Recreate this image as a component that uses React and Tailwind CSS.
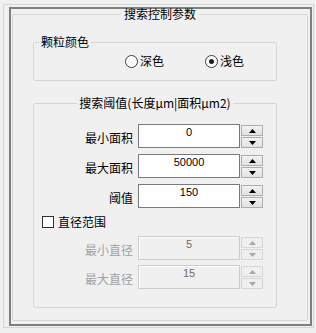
const cjk = { fontFamily: '"Noto Sans CJK SC", "Noto Sans", sans-serif' };
const num = { fontFamily: '"Liberation Sans", Arial, sans-serif' };

const Arrow = ({ up, disabled }) => (
    <svg width="7" height="4" viewBox="0 0 7 4">
        <polygon
            points={up ? '3.5,0 7,4 0,4' : '0,0 7,0 3.5,4'}
            fill={disabled ? '#a8a8a8' : '#000'}
        />
    </svg>
);

const Spinner = ({ disabled }) => {
    const btn = disabled
        ? 'h-[11px] w-[22px] flex items-center justify-center border border-[#d6d6d6] bg-[#efefef]'
        : 'h-[11px] w-[22px] flex items-center justify-center border border-[#adadad] bg-gradient-to-b from-[#f2f2f2] to-[#e2e2e2]';
    return (
        <div className="ml-[1px] pt-[1px] flex flex-col gap-[1px]">
            <div className={btn}><Arrow up disabled={disabled} /></div>
            <div className={btn}><Arrow disabled={disabled} /></div>
        </div>
    );
};

const NumRow = ({ label, value, disabled }) => (
    <div className="flex h-[24px] items-start">
        <div
            className={`w-[99px] pt-[7px] text-right text-[12px] leading-[13px] ${disabled ? 'text-[#a0a0a0]' : 'text-black'}`}
            style={cjk}
        >
            {label}
        </div>
        <div
            className={`ml-[5px] h-[24px] w-[102px] border text-center text-[11px] leading-[14px] ${disabled
                ? 'border-[#cccccc] bg-[#f0f0f0] text-[#6d6d6d] shadow-[inset_1px_1px_0_#ffffff]'
                : 'border-[#7a7a7a] bg-white text-black'
                }`}
            style={num}
        >
            {value}
        </div>
        <Spinner disabled={disabled} />
    </div>
);

const Radio = ({ label, checked }) => (
    <div className="flex items-center gap-[2px]">
        <div className="w-[13px] h-[13px] rounded-full border border-[#3c3c3c] bg-white flex items-center justify-center">
            {checked && <div className="w-[5px] h-[5px] rounded-full bg-[#1e1e1e]" />}
        </div>
        <span className="text-[12px] leading-[14px] text-black" style={cjk}>{label}</span>
    </div>
);

export default function App() {
    return (
        <div className="w-[316px] h-[333px] bg-[#f0f0f0] pl-[3px] pt-[4px] overflow-hidden" style={cjk}>
            {/* outer light frame */}
            <div className="w-[311px] h-[324px] border border-[#d6d6d6] pl-[5px] pt-[2px]">
                {/* dark frame */}
                <div className="w-[303px] h-[319px] border-2 border-[#7f7f7f]">
                    {/* 搜索控制参数 */}
                    <fieldset className="ml-[1px] w-[296px] h-[312px] border border-[#d5d5d5] rounded-[2px]">
                        <legend className="mx-auto px-[3px] text-[12px] leading-[10px] text-black">
                            搜索控制参数
                        </legend>

                        {/* 颗粒颜色 */}
                        <fieldset className="ml-[20px] mt-[17px] w-[244px] h-[45px] border border-[#d5d5d5] rounded-[2px]">
                            <legend className="ml-[5px] px-[2px] text-[12px] leading-[12px] text-black">
                                颗粒颜色
                            </legend>
                            <div className="flex pt-[6px] pl-[91px] gap-[41px]">
                                <Radio label="深色" />
                                <Radio label="浅色" checked />
                            </div>
                        </fieldset>

                        {/* 搜索阈值 */}
                        <fieldset className="ml-[20px] mt-[15px] w-[244px] h-[212px] border border-[#d5d5d5] rounded-[2px]">
                            <legend className="mx-auto px-[2px] text-[12px] leading-[14px] text-black">
                                搜索阈值(长度μm|面积μm2)
                            </legend>
                            <div className="flex flex-col pt-[14px]">
                                <div className="flex flex-col gap-[6px]">
                                    <NumRow label="最小面积" value="0" />
                                    <NumRow label="最大面积" value="50000" />
                                    <NumRow label="阈值" value="150" />
                                </div>
                                <div className="mt-[7px] ml-[8px] flex h-[14px] items-center gap-[4px]">
                                    <div className="w-[12px] h-[12px] border border-[#333333] bg-white" />
                                    <span className="text-[12px] leading-[14px] text-black">直径范围</span>
                                </div>
                                <div className="mt-[7px] flex flex-col gap-[5px]">
                                    <NumRow label="最小直径" value="5" disabled />
                                    <NumRow label="最大直径" value="15" disabled />
                                </div>
                            </div>
                        </fieldset>
                    </fieldset>
                </div>
            </div>
        </div>
    );
}
